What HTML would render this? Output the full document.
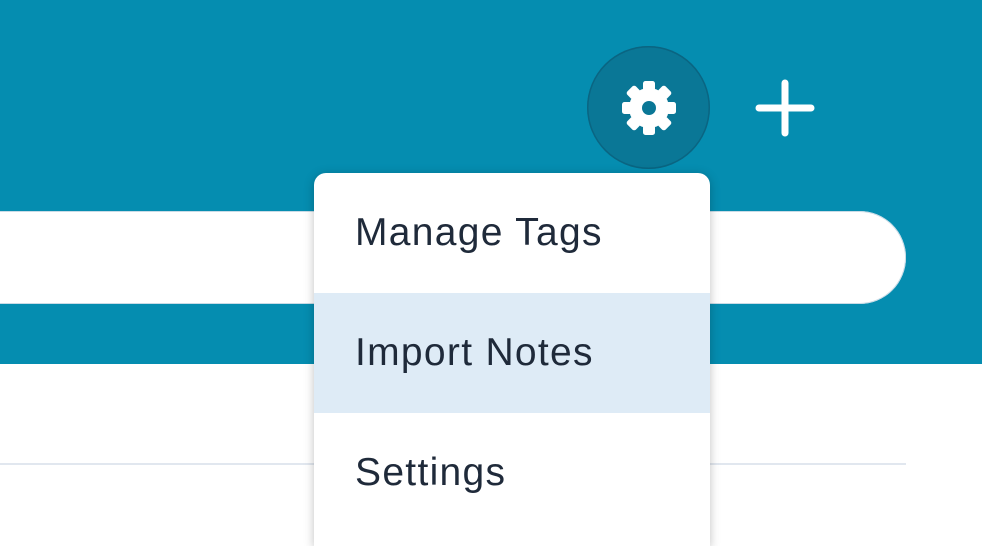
<!DOCTYPE html>
<html><head><style>
html,body{margin:0;width:982px;height:546px;overflow:hidden}
body{background:#fff;position:relative;font-family:"Liberation Sans",sans-serif}
.hdr{position:absolute;left:0;top:0;width:982px;height:364px;background:#058db0}
.search{position:absolute;left:-60px;top:211px;width:966px;height:93px;border-radius:47px;background:#fff;box-shadow:inset 0 0 0 1px #c9dbe6}
.line{position:absolute;left:0;top:463px;width:906px;height:2px;background:#e1e7ef}
.gear{position:absolute;left:587px;top:46px;width:123px;height:123px;border-radius:50%;background:#0a7796;box-shadow:inset 0 0 0 1.5px #0a6582}
.menu{position:absolute;left:314px;top:173px;width:396px;height:373px;background:#fff;border-radius:12px 12px 0 0;box-shadow:0 2px 10px rgba(0,0,0,.25);overflow:hidden}
.item{height:120px;line-height:120px;padding-left:41px;font-size:39px;color:#1f2a3a;letter-spacing:1.3px}
.hl{background:#deebf6}
</style></head><body>
<div class="hdr"></div>
<div class="search"></div>
<div class="line"></div>
<div class="gear">
<svg width="123" height="123" viewBox="0 0 123 123">
<g transform="translate(62,62)" fill="#fff">
<g id="t"><rect x="-6" y="-27" width="12" height="10" rx="2.5"/></g>
<use href="#t" transform="rotate(45)"/><use href="#t" transform="rotate(90)"/><use href="#t" transform="rotate(135)"/>
<use href="#t" transform="rotate(180)"/><use href="#t" transform="rotate(225)"/><use href="#t" transform="rotate(270)"/><use href="#t" transform="rotate(315)"/>
<circle r="20"/>
<circle r="7" fill="#0a7796"/>
</g></svg></div>
<svg style="position:absolute;left:755px;top:78px" width="60" height="60" viewBox="0 0 60 60">
<path d="M30 5V55M4 30H56" stroke="#fff" stroke-width="7" stroke-linecap="round"/></svg>
<div class="menu">
<div class="item">Manage Tags</div>
<div class="item hl">Import Notes</div>
<div class="item">Settings</div>
</div>
</body></html>
